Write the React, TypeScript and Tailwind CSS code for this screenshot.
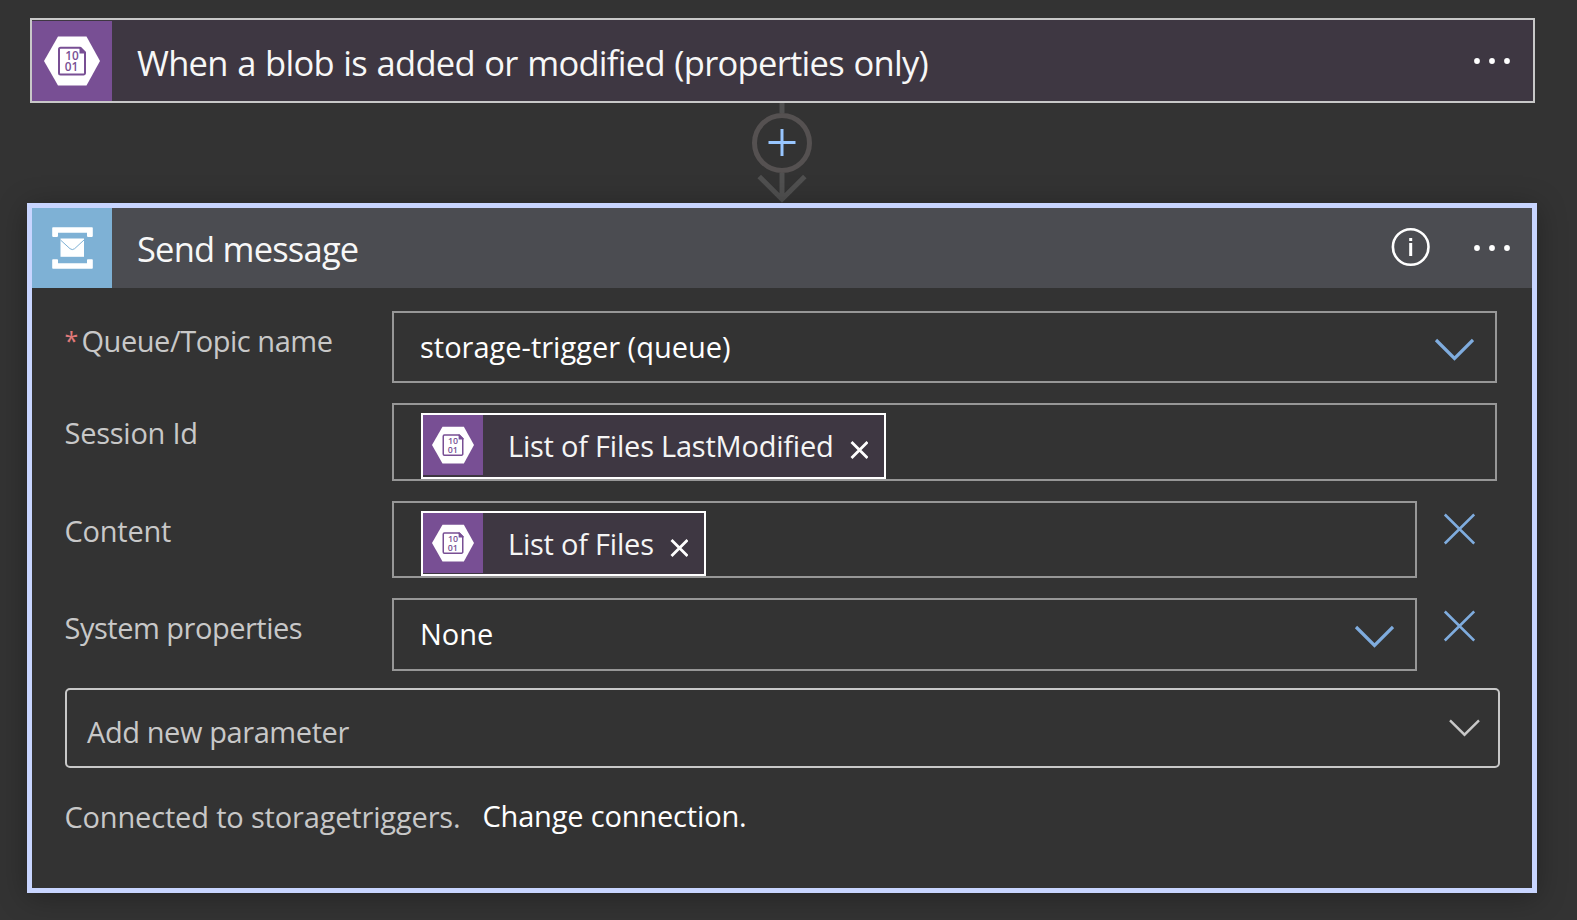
import type { ReactNode } from "react";

function BlobIcon({ className }: { className: string }) {
  return (
    <svg viewBox="0 0 80 80" className={className}>
      <rect width="80" height="80" fill="#784f94" />
      <path d="M12 40 26 15.5h28.500L68 40 54.500 64.500H26z" fill="#fff" />
      <path
        d="M28.500 26.800H48l5 5V52a1.500 1.500 0 0 1-1.500 1.500h-23A1.500 1.500 0 0 1 27 52V28.300a1.500 1.500 0 0 1 1.500-1.500z"
        fill="none"
        stroke="#784f94"
        strokeWidth="2"
      />
      <path d="M47.500 26h1.500l5 5v1.500h-6.500z" fill="#784f94" />
      <g fill="#784f94" fontFamily="Open Sans, sans-serif" fontSize="11.800" fontWeight="600" textAnchor="middle">
        <text x="40" y="39.200">10</text>
        <text x="39.600" y="50.400">01</text>
      </g>
    </svg>
  );
}

function ServiceBusIcon({ className }: { className: string }) {
  return (
    <svg viewBox="0 0 80 80" className={className}>
      <rect width="80" height="80" fill="#7eb1d5" />
      <path
        d="M21 19.300h39a.8.8 0 0 1 .8.8v8a.8.8 0 0 1-.8.800h-4.200a.8.8 0 0 1-.8-.8v-3.300H26v3.300a.8.8 0 0 1-.8.800H21a.8.8 0 0 1-.8-.8v-8a.8.8 0 0 1 .8-.8zM21 60.800h39a.8.8 0 0 0 .8-.8v-8a.8.8 0 0 0-.8-.8h-4.200a.8.8 0 0 0-.8.8v3.300H26V52a.8.8 0 0 0-.8-.8H21a.8.8 0 0 0-.8.8v8a.8.8 0 0 0 .8.800z"
        fill="#fff"
      />
      <rect x="28.500" y="30.500" width="23.500" height="18.300" fill="#fff" />
      <path d="M28.500 32 38 40.700Q40.300 42.500 42.600 40.700L52 32" fill="none" stroke="#7eb1d5" strokeWidth="1" />
    </svg>
  );
}

function MoreDots() {
  return (
    <svg viewBox="0 0 36 6" className="h-1.5 w-9 shrink-0" fill="#fff">
      <circle cx="3" cy="3" r="2.900" />
      <circle cx="18" cy="3" r="2.900" />
      <circle cx="33" cy="3" r="2.900" />
    </svg>
  );
}

function InfoIcon() {
  return (
    <svg viewBox="0 0 40 40" className="size-10 shrink-0" fill="none" stroke="#fff">
      <circle cx="19.700" cy="20" r="17.800" strokeWidth="2.600" />
      <path d="M19.700 16v13M19.700 11v3" strokeWidth="3" />
    </svg>
  );
}

function Chevron() {
  return (
    <svg viewBox="0 0 40 24" className="h-6 w-10 shrink-0" fill="none" stroke="#7facde" strokeWidth="3.200">
      <path d="M2 2 20.500 20.500 39 2" />
    </svg>
  );
}

function RemoveButton() {
  return (
    <div className="w-20 shrink-0 pt-3 pl-[26px]">
      <svg viewBox="0 0 32 32" className="size-8" fill="none" stroke="#7facde" strokeWidth="2.600">
        <path d="M1.800 1.500 31.200 30.500M31.200 1.500 1.800 30.500" />
      </svg>
    </div>
  );
}

function Token({ label, className }: { label: string; className: string }) {
  return (
    <div className={`flex border-2 border-white bg-[#3e3742] ${className}`}>
      <BlobIcon className="size-[60px] shrink-0" />
      <span className="ml-[25px] grow text-[29px] leading-[62px] tracking-[-0.22px] whitespace-nowrap text-[#f5f5f5]">
        {label}
      </span>
      <svg viewBox="0 0 18 18" className="mt-[26px] mr-4 h-[18px] w-[18px] shrink-0" fill="none" stroke="#fff" strokeWidth="2.800">
        <path d="M1.500 1 17.500 17M17.500 1 1.500 17" />
      </svg>
    </div>
  );
}

function Row({
  label,
  tracking,
  required,
  removable,
  className,
  children,
}: {
  label: string;
  tracking: string;
  required?: boolean;
  removable?: boolean;
  className: string;
  children: ReactNode;
}) {
  return (
    <div className={`flex ${className}`}>
      <div className={`flex w-[328px] shrink-0 pt-2.5 pl-[0.5px] text-[29px] leading-10 text-[#c8c8c8] ${tracking}`}>
        {required && <span className="w-[17px] text-[25px] leading-[38px] text-[#e07a7a]">*</span>}
        {label}
      </div>
      <div className="flex grow border-2 border-[#979797] pl-[27px]">{children}</div>
      {removable && <RemoveButton />}
    </div>
  );
}

export default function App() {
  return (
    <div className="flex h-[920px] w-[1577px] flex-col overflow-hidden bg-[#333333] pt-[18px] font-['Open_Sans',sans-serif]">
      <section className="ml-[30px] flex h-[85px] w-[1505px] items-end border-2 border-[#c8c8c8] bg-[#3e3742]">
        <BlobIcon className="size-20 shrink-0" />
        <h1 className="ml-[25px] h-20 grow text-[34.5px] leading-[83px] tracking-[-0.71px] whitespace-nowrap text-[#f7f7f7] [word-spacing:1.2px]">
          When a blob is added or modified (properties only)
        </h1>
        <div className="flex h-20 items-center pr-[23px]">
          <MoreDots />
        </div>
      </section>

      <div className="ml-[742px] h-[100px] w-20">
        <svg viewBox="0 0 80 100" className="h-[100px] w-20" fill="none">
          <path d="M40 0v10M40 70v26M17.200 73.500 40 96.300 62.800 73.500" stroke="#505050" strokeWidth="5" />
          <circle cx="40" cy="40" r="27.500" stroke="#555151" strokeWidth="5" />
          <path d="M26.500 39.500h27M40 26v27" stroke="#98c6ff" strokeWidth="3" />
        </svg>
      </div>

      <section className="ml-[27px] h-[690px] w-[1510px] shrink-0 border-5 border-[#c8d5ff] bg-[#333333] shadow-[0_4px_28px_rgba(0,0,0,0.3)]">
        <header className="flex h-20 items-center bg-[#4b4c51]">
          <ServiceBusIcon className="size-20 shrink-0" />
          <h2 className="ml-[25px] h-20 grow text-[34.5px] leading-[82px] tracking-[-0.8px] whitespace-nowrap text-[#f7f7f7]">
            Send message
          </h2>
          <div className="mr-[43px] -mt-0.5 h-10">
            <InfoIcon />
          </div>
          <div className="mr-[22px]">
            <MoreDots />
          </div>
        </header>

        <div className="pt-[23px] pr-[35px] pl-8">
          <Row label="Queue/Topic name" tracking="tracking-[-0.45px]" required className="mb-5 h-[72px]">
            <span className="-ml-px grow pt-3.5 text-[29px] leading-10 text-white">storage-trigger (queue)</span>
            <div className="pt-[25px] pr-[21px]">
              <Chevron />
            </div>
          </Row>
          <Row label="Session Id" tracking="tracking-[-0.25px]" className="mb-5 h-[78px]">
            <Token label="List of Files LastModified" className="mt-2 h-[66px] w-[465px]" />
          </Row>
          <Row label="Content" tracking="tracking-[-0.23px]" removable className="mb-5 h-[77px]">
            <Token label="List of Files" className="mt-2 h-[65px] w-[285px]" />
          </Row>
          <Row label="System properties" tracking="tracking-[-0.49px]" removable className="mb-[17px] h-[73px]">
            <span className="-ml-px grow pt-3.5 text-[29px] leading-10 text-white">None</span>
            <div className="pt-[25px] pr-[21px]">
              <Chevron />
            </div>
          </Row>

          <div className="-mr-[3px] ml-px flex h-20 justify-between rounded-[5px] border-2 border-[#c8c8c8] pr-[17px] pl-5">
            <span className="pt-[22px] text-[29px] leading-10 tracking-[-0.41px] text-[#c8c8c8]">Add new parameter</span>
            <svg viewBox="0 0 32 18" className="mt-[29px] h-[18px] w-8" fill="none" stroke="#c8c8c8" strokeWidth="2.400">
              <path d="M1 1.300 15.500 15.700 30 1.300" />
            </svg>
          </div>

          <footer className="flex items-start pt-[29px] pl-[0.5px] text-[29px] leading-10 whitespace-nowrap">
            <span className="tracking-[-0.17px] text-[#c8c8c8]">Connected to storagetriggers.</span>
            <span className="-mt-px ml-[22px] tracking-[-0.17px] text-white">Change connection.</span>
          </footer>
        </div>
      </section>
    </div>
  );
}
